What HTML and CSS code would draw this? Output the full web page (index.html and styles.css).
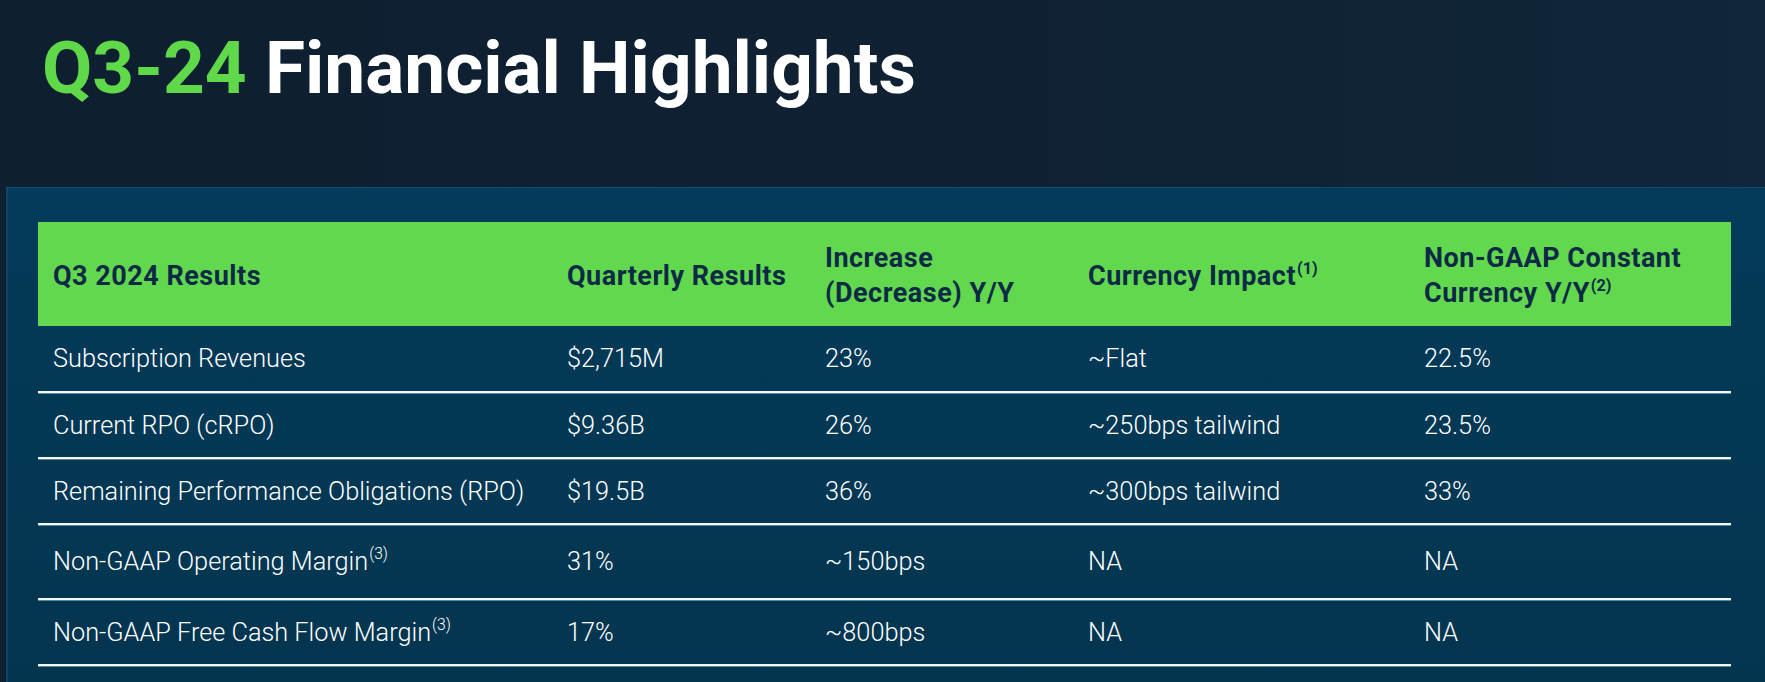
FILE: index.html
```html
<!DOCTYPE html>
<html lang="en">
<head>
<meta charset="utf-8">
<title>Q3-24 Financial Highlights</title>
<link rel="stylesheet" href="styles.css">
</head>
<body>
<header class="top">
  <h1 class="title"><span class="accent">Q3-24</span> Financial Highlights</h1>
</header>
<section class="panel">
  <div class="table">
    <div class="row head">
      <div class="cell">Q3 2024 Results</div>
      <div class="cell">Quarterly Results</div>
      <div class="cell">Increase<br>(Decrease) Y/Y</div>
      <div class="cell">Currency Impact<sup>(1)</sup></div>
      <div class="cell">Non-GAAP Constant<br>Currency Y/Y<sup>(2)</sup></div>
    </div>
    <div class="row r1">
      <div class="cell">Subscription Revenues</div>
      <div class="cell">$2,715M</div>
      <div class="cell">23%</div>
      <div class="cell">~Flat</div>
      <div class="cell">22.5%</div>
    </div>
    <div class="row r2">
      <div class="cell">Current RPO (cRPO)</div>
      <div class="cell">$9.36B</div>
      <div class="cell">26%</div>
      <div class="cell">~250bps tailwind</div>
      <div class="cell">23.5%</div>
    </div>
    <div class="row r3">
      <div class="cell">Remaining Performance Obligations (RPO)</div>
      <div class="cell">$19.5B</div>
      <div class="cell">36%</div>
      <div class="cell">~300bps tailwind</div>
      <div class="cell">33%</div>
    </div>
    <div class="row r4">
      <div class="cell">Non-GAAP Operating Margin<sup>(3)</sup></div>
      <div class="cell">31%</div>
      <div class="cell">~150bps</div>
      <div class="cell">NA</div>
      <div class="cell">NA</div>
    </div>
    <div class="row r5">
      <div class="cell">Non-GAAP Free Cash Flow Margin<sup>(3)</sup></div>
      <div class="cell">17%</div>
      <div class="cell">~800bps</div>
      <div class="cell">NA</div>
      <div class="cell">NA</div>
    </div>
  </div>
</section>
</body>
</html>
```
FILE: styles.css
```css
html, body {
  margin: 0;
  height: 100%;
}
body {
  background: linear-gradient(90deg, #0e1f30 0%, #0f2133 60%, #11263b 100%);
  overflow: hidden;
  display: flex;
  flex-direction: column;
}
.top {
  height: 187px;
  box-sizing: border-box;
  padding: 32px 0 0 42px;
  flex: none;
}
.title {
  margin: 0;
  font-family: "Roboto", "Liberation Sans", sans-serif;
  font-weight: 700;
  font-size: 73px;
  line-height: 73px;
  color: #ffffff;
  white-space: nowrap;
}
.accent {
  color: #5fd84a;
}
.panel {
  flex: 1;
  margin-left: 6px;
  border-top: 1px solid #0e4d70;
  border-left: 2px solid #0a4767;
  background: linear-gradient(180deg, #043b5a 0%, #03354f 100%);
  padding: 34px 0 0 30px;
}
.table {
  width: 1693px;
}
.row {
  display: grid;
  grid-template-columns: 514px 258px 263px 336px 322px;
  align-items: center;
  border-bottom: 2px solid #f4f7f9;
  box-shadow: 0 1px 0 rgba(170, 200, 215, 0.55);
  font-family: "Roboto", "Liberation Sans", sans-serif;
  font-weight: 300;
  font-size: 25.3px;
  color: #ffffff;
}
.cell {
  padding-left: 15px;
  white-space: nowrap;
}
.head {
  height: 104px;
  box-sizing: border-box;
  padding-top: 4px;
  background: #62d84e;
  border-bottom: none;
  box-shadow: none;
  font-family: "Roboto", "Liberation Sans", sans-serif;
  font-weight: 700;
  font-size: 27px;
  letter-spacing: 0.5px;
  line-height: 35px;
  color: #0c2a45;
}
.r1 { height: 65px; }
.r2 { height: 64px; }
.r3 { height: 64px; }
.r4 { height: 73px; }
.r5 { height: 64px; }
sup {
  font-size: 0.62em;
  line-height: 0;
  vertical-align: 0.7em;
  margin-left: 1px;
}
.head sup {
  font-size: 0.6em;
  letter-spacing: 0;
  vertical-align: 0.65em;
}
```
